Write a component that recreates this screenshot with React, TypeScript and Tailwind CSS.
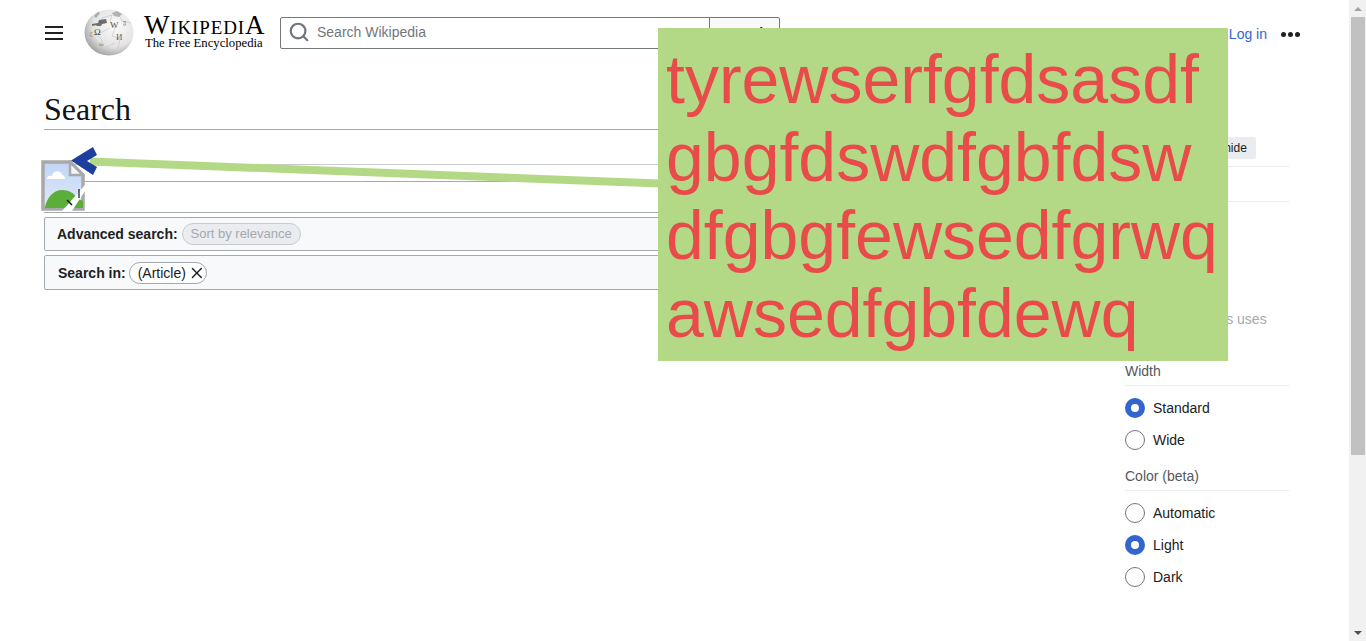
import { Search, X } from 'lucide-react'

const sans = { fontFamily: '"Liberation Sans", Arial, sans-serif' }

function Globe() {
  return (
    <svg width="50" height="50" viewBox="0 0 50 50" className="shrink-0">
      <defs>
        <radialGradient id="globe" cx="0.62" cy="0.36" r="0.74">
          <stop offset="0" stopColor="#fbfbfb" />
          <stop offset="0.6" stopColor="#e4e4e4" />
          <stop offset="1" stopColor="#929292" />
        </radialGradient>
      </defs>
      <ellipse cx="25" cy="25.5" rx="24.5" ry="23" fill="url(#globe)" />
      <path d="M8 19l9-2 1-6 10-3-2 6 5 7-3 8 8 3-2 9M3 31l9-4 6 6-2 9M34 6l4 8 9 2M26 21l-12 6M31 36l-9 4" fill="none" stroke="#c6c6c6" strokeWidth="0.7" />
      <path d="M8 17l6-1 1-3 7-1 1 4-5 1-1 2h-4l-1-1-4 1z" fill="#6e6e6e" />
      <path d="M10 9l4-4 2 1-4 5z" fill="#a8a8a8" />
      <path d="M28 6l5-2 5 3-3 3-5-1z" fill="#8c8c8c" opacity="0.6" />
      <text x="10" y="28" fontSize="9" fill="#444" fontFamily="Liberation Serif">Ω</text>
      <text x="26" y="21" fontSize="9" fill="#555" fontFamily="Liberation Serif">W</text>
      <text x="32" y="33" fontSize="9" fill="#666" fontFamily="Liberation Serif">И</text>
      <text x="15" y="39" fontSize="7" fill="#777" fontFamily="Liberation Serif">ω</text>
      <text x="39" y="17" fontSize="6" fill="#777" fontFamily="Liberation Serif">ვ</text>
      <text x="5" y="28" fontSize="6" fill="#888" fontFamily="Liberation Serif">ج</text>
    </svg>
  )
}

function BrokenImage() {
  return (
    <svg width="44" height="51" viewBox="0 0 44 51" className="absolute left-[-3px] top-[-22px]">
      <defs>
        <linearGradient id="sky" x1="0" y1="0" x2="0" y2="1">
          <stop offset="0" stopColor="#c0d6f5" />
          <stop offset="1" stopColor="#e0e9f9" />
        </linearGradient>
      </defs>
      <path d="M2 2h27l13 13v34H2z" fill="url(#sky)" stroke="#a9a9a9" strokeWidth="3.5" />
      <path d="M29 2v13h13z" fill="#f4f4f4" stroke="#a9a9a9" strokeWidth="2.5" />
      <path d="M6 19c0-3 3-4 5-3 1-6 9-6 10-1 2 0 3 2 3 4z" fill="#fff" />
      <path d="M4 47c2-10 9-17 17-17 7 0 12 3 15 8l6 3v7H4z" fill="#5cae3a" />
      <path d="M21 51l23-26v6L31 51z" fill="#fff" />
      <path d="M26 40l5 5" stroke="#111" strokeWidth="1.5" />
      <path d="M38 29v9" stroke="#111" strokeWidth="1.2" />
    </svg>
  )
}

function Radio({ label, checked }: { label: string; checked?: boolean }) {
  return (
    <div className="flex h-8 items-center gap-2 text-sm text-[#202122]">
      {checked ? (
        <span className="h-5 w-5 rounded-full border-[6px] border-[#3366cc] bg-white" />
      ) : (
        <span className="h-5 w-5 rounded-full border border-[#72777d] bg-white" />
      )}
      <span>{label}</span>
    </div>
  )
}

function Scrollbar() {
  return (
    <div className="flex h-[641px] w-[17px] shrink-0 flex-col items-center bg-[#f1f1f1]">
      <div className="flex h-[17px] w-full shrink-0 items-center justify-center">
        <span className="h-0 w-0 border-x-[4px] border-b-[4px] border-x-transparent border-b-[#a3a3a3]" />
      </div>
      <div className="ml-[1px] h-[438px] w-[14px] shrink-0 bg-[#c1c1c1]" />
      <div className="mt-auto flex h-[17px] w-full shrink-0 items-center justify-center">
        <span className="h-0 w-0 border-x-[4px] border-t-[4px] border-x-transparent border-t-[#505050]" />
      </div>
    </div>
  )
}

export default function App() {
  return (
    <div className="relative flex h-[641px] overflow-hidden bg-white text-[#202122]" style={sans}>
      <div className="min-w-0 flex-1">
        {/* header */}
        <header className="flex h-[66px] items-start pl-[45px] pr-[49px]">
          <div className="mt-[26px] flex w-[18px] flex-col gap-[4px]">
            <span className="h-[2px] bg-[#202122]" />
            <span className="h-[2px] bg-[#202122]" />
            <span className="h-[2px] bg-[#202122]" />
          </div>
          <div className="ml-[21px] mt-[7px]">
            <Globe />
          </div>
          <div className="ml-[10px] mt-[12px] w-[126px]" style={{ fontFamily: '"Liberation Serif", serif' }}>
            <div className="h-[24px] whitespace-nowrap text-[27px] leading-[27px] tracking-[0.85px] text-black [font-variant:small-caps]">
              WikipediA
            </div>
            <div className="ml-[1px] whitespace-nowrap text-[12.7px] leading-[14px] text-black">The Free Encyclopedia</div>
          </div>
          <div className="ml-[10px] mt-[17px] flex h-[32px] w-[500px]">
            <div className="flex flex-1 items-center rounded-l-[2px] border border-[#72777d] pb-[2px] pl-[7px] text-sm text-[#72777d]">
              <Search size={22} strokeWidth={2.4} className="text-[#72777d]" />
              <span className="ml-[7px]">Search Wikipedia</span>
            </div>
            <div className="-ml-px flex w-[71px] items-center justify-center rounded-r-[2px] border border-[#72777d] bg-[#f8f9fa] text-sm font-bold">
              Search
            </div>
          </div>
          <nav className="ml-auto mt-[24px] flex items-center text-sm text-[#3366cc]">
            <span>Donate</span>
            <span className="ml-3">Create account</span>
            <span className="ml-3">Log in</span>
            <div className="ml-[14px] flex gap-[2px]">
              <span className="h-[5px] w-[5px] rounded-full bg-[#202122]" />
              <span className="h-[5px] w-[5px] rounded-full bg-[#202122]" />
              <span className="h-[5px] w-[5px] rounded-full bg-[#202122]" />
            </div>
          </nav>
        </header>

        <div className="flex gap-10 pl-[44px] pr-[60px]">
          {/* search results column */}
          <main className="min-w-0 flex-1">
            <h1
              className="mt-[23px] h-[41px] border-b border-[#a2a9b1] text-[32px] leading-[40px] text-[#101418]"
              style={{ fontFamily: '"Liberation Serif", serif' }}
            >
              Search
            </h1>
            <div className="h-[35px] border-b border-[#c8ccd1]" />
            <div className="relative mt-[16px] h-[32px] border-y border-[#a2a9b1]">
              <BrokenImage />
            </div>
            <div className="mt-[4px] flex h-[34px] items-center rounded-[2px] border border-[#a2a9b1] bg-[#f8f9fa] pl-[12px] text-sm">
              <b>Advanced search:</b>
              <span className="ml-[4px] flex h-[22px] w-[119px] items-center justify-center rounded-full border border-[#c8ccd1] bg-[#eaecf0] text-[13px] text-[#a2a9b1]">
                Sort by relevance
              </span>
            </div>
            <div className="mt-[4px] flex h-[35px] items-center rounded-[2px] border border-[#a2a9b1] bg-[#f8f9fa] pl-[13px] text-sm">
              <b>Search in:</b>
              <span className="ml-[3px] flex h-[22px] w-[78px] items-center gap-[2px] rounded-full border border-[#a2a9b1] bg-white pl-[8px]">
                (Article)
                <X size={20} strokeWidth={2} />
              </span>
            </div>
          </main>

          {/* appearance column */}
          <aside className="w-[164px] shrink-0 text-sm">
            <div className="mt-[71px] flex h-[30px] items-start justify-between border-b border-[#eaecf0] pr-[33px]">
              <span className="mt-px font-bold">Appearance</span>
              <span className="flex h-[22px] w-[41px] items-center justify-center rounded-[2px] bg-[#eaecf0] text-xs text-[#202122]">
                hide
              </span>
            </div>
            <div className="h-[35px] border-b border-[#eaecf0]" />
            <div className="mt-[107px] h-[20px] leading-5 text-[#a2a9b1]">This page always uses</div>
            <div className="mt-[32px] h-[25px] border-b border-[#eaecf0] text-[#54595d]">Width</div>
            <div className="mt-[6px]">
              <Radio label="Standard" checked />
              <Radio label="Wide" />
            </div>
            <div className="mt-[10px] h-[25px] border-b border-[#eaecf0] text-[#54595d]">Color (beta)</div>
            <div className="mt-[6px]">
              <Radio label="Automatic" />
              <Radio label="Light" checked />
              <Radio label="Dark" />
            </div>
          </aside>
        </div>
      </div>

      <Scrollbar />

      {/* annotation drawn over the page */}
      <div className="absolute left-[658px] top-[28px] h-[333px] w-[570px] bg-[#b4d986] pl-[8px] pt-[12px] text-[68px] leading-[78px] text-[#e94b4b]">
        <div>tyrewserfgfdsasdf</div>
        <div>gbgfdswdfgbfdsw</div>
        <div>dfgbgfewsedfgrwq</div>
        <div>awsedfgbfdewq</div>
      </div>
      <svg width="620" height="60" viewBox="0 0 620 60" className="absolute left-[60px] top-[140px]">
        <path d="M30 21.5L600 43.5" stroke="#b4d986" strokeWidth="8" />
        <path d="M11 20.5L33 7l4 8-10 6 10 6-4 8z" fill="#1e3f9e" />
      </svg>
    </div>
  )
}
